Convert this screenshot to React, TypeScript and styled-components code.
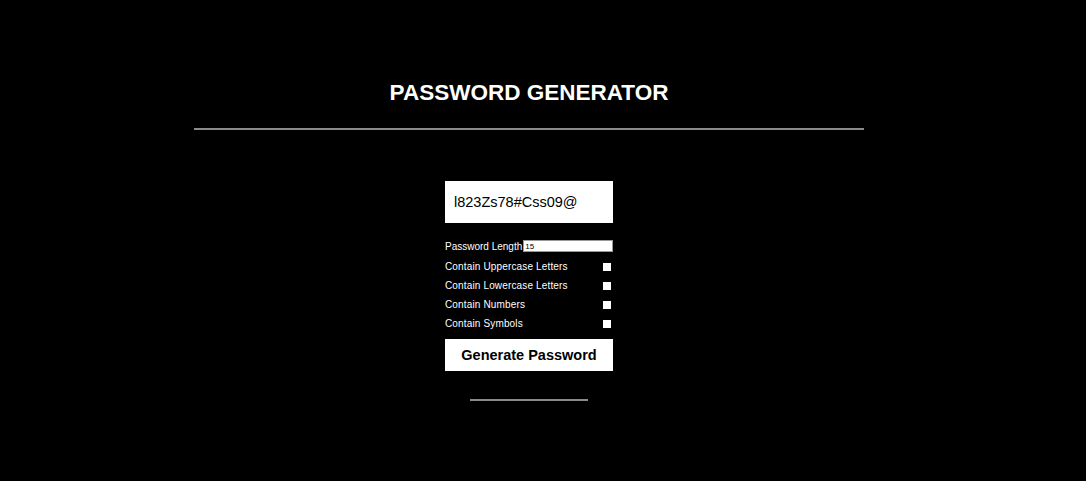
import styled, { createGlobalStyle } from 'styled-components';

const GlobalStyle = createGlobalStyle`
  html, body {
    margin: 0;
    padding: 0;
    background: #000;
  }
  body {
    font-family: 'Liberation Sans', Arial, sans-serif;
    color: #fff;
  }
`;

const Page = styled.div`
  width: 1058px;
  min-height: 481px;
  display: flex;
  flex-direction: column;
  align-items: center;
  padding-top: 79px;
  box-sizing: border-box;
`;

const Title = styled.h1`
  margin: 0;
  font-size: 22.5px;
  font-weight: bold;
  line-height: 27px;
`;

const Divider = styled.div<{ width: number }>`
  width: ${({ width }) => width}px;
  height: 2px;
  background: #8a8a8a;
`;

const TopDivider = styled(Divider)`
  margin-top: 22px;
`;

const Form = styled.div`
  width: 168px;
  margin-top: 51px;
  display: flex;
  flex-direction: column;
`;

const Output = styled.div`
  height: 42px;
  background: #fff;
  color: #000;
  font-size: 14.5px;
  display: flex;
  align-items: center;
  padding-left: 9px;
`;

const Options = styled.div`
  margin-top: 17px;
  display: flex;
  flex-direction: column;
`;

const Row = styled.label`
  height: 19px;
  display: flex;
  align-items: center;
  justify-content: space-between;
  font-size: 10px;
  letter-spacing: 0.15px;
  color: #fff;
`;

const LengthRow = styled(Row)`
  justify-content: flex-start;
  height: 12px;
  margin-bottom: 5px;
  letter-spacing: 0;
`;

const LengthInput = styled.input`
  flex: 1;
  min-width: 0;
  height: 12px;
  box-sizing: border-box;
  margin: 0 0 0 1px;
  padding: 0 1px;
  border: 1px solid #999;
  font-size: 8px;
  font-family: 'Liberation Sans', Arial, sans-serif;
  background: #fff;
  color: #000;
`;

const Check = styled.input`
  width: 8px;
  height: 8px;
  margin: 0 2px 0 0;
  appearance: none;
  background: #fff;
  border: none;
`;

const GenerateButton = styled.button`
  margin-top: 6px;
  height: 32px;
  background: #fff;
  color: #000;
  border: none;
  font-family: 'Liberation Sans', Arial, sans-serif;
  font-size: 14.5px;
  font-weight: bold;
  cursor: pointer;
`;

const BottomDivider = styled(Divider)`
  margin-top: 28px;
`;

const options = [
  'Contain Uppercase Letters',
  'Contain Lowercase Letters',
  'Contain Numbers',
  'Contain Symbols',
];

export default function App() {
  return (
    <>
      <GlobalStyle />
      <Page>
        <Title>PASSWORD GENERATOR</Title>
        <TopDivider width={670} />
        <Form>
          <Output>l823Zs78#Css09@</Output>
          <Options>
            <LengthRow>
              Password Length
              <LengthInput type='number' defaultValue={15} />
            </LengthRow>
            {options.map((o) => (
              <Row key={o}>
                {o}
                <Check type='checkbox' />
              </Row>
            ))}
          </Options>
          <GenerateButton>Generate Password</GenerateButton>
        </Form>
        <BottomDivider width={118} />
      </Page>
    </>
  );
}
